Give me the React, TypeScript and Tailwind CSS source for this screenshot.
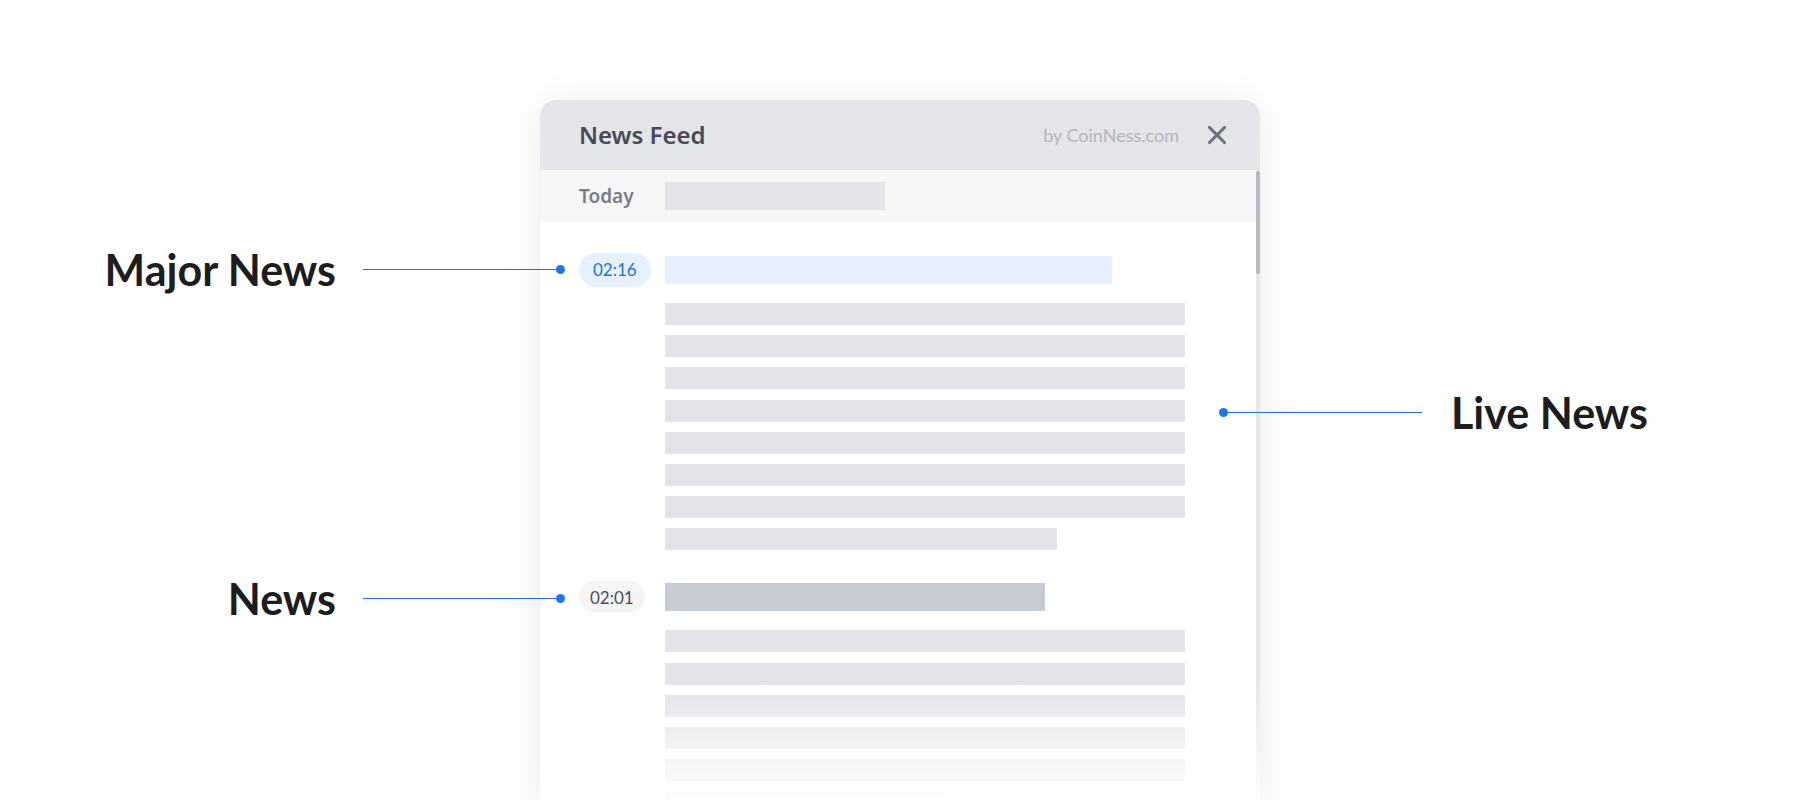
import { X } from 'lucide-react'

const sans = "font-['Noto_Sans',sans-serif]"
const lato = "font-['Lato',sans-serif]"

const LeftCallout = function ({ label, className }: { label: string; className: string }) {
  return (
    <div className={`absolute left-0 flex h-[44px] w-[565px] items-center justify-end ${className}`}>
      <span className={`${lato} text-[43px] leading-none font-bold text-[#1c1d21]`}>{label}</span>
      <span className="ml-[27px] h-px w-[197px] bg-[#1f6fe5]" />
      <span className="-ml-[4px] h-[9px] w-[9px] rounded-full bg-[#1877f2]" />
    </div>
  )
}

const Lines = function ({
  count,
  lastWidth,
  offset,
}: {
  count: number
  lastWidth: string
  offset: string
}) {
  return (
    <div className={`flex flex-col gap-[10.2px] ${offset}`}>
      {Array.from({ length: count }).map((_, i) => (
        <div
          key={i}
          className={`h-[22px] bg-[#e3e4e8] ${i === count - 1 ? lastWidth : 'w-[520px]'}`}
        />
      ))}
    </div>
  )
}

export default function App() {
  return (
    <div className="relative h-[800px] w-[1800px] overflow-hidden bg-white">
      <div className="pt-[100px] pl-[540px]">
        <div className="relative h-[700px] w-[720px] overflow-hidden rounded-t-[16px] bg-white shadow-[0_6px_40px_rgba(0,0,0,0.09)]">
          {/* header */}
          <div className="flex h-[70px] items-center bg-[#e4e5e9] pr-[28px] pl-[39px]">
            <h1 className={`${sans} text-[24px] font-semibold text-[#474b54]`}>News Feed</h1>
            <span className={`${lato} ml-auto text-[18px] text-[#b3b6bc]`}>by CoinNess.com</span>
            <X className="ml-[23px] h-[30px] w-[30px] text-[#6d727b]" strokeWidth={2.5} />
          </div>

          <div className="relative">
            <div className="flex h-[52px] items-center bg-[#f6f6f7] pl-[39px]">
              <span className={`${sans} w-[86px] text-[19px] font-semibold text-[#787d87]`}>Today</span>
              <div className="h-[28px] w-[220px] bg-[#e3e4e8]" />
            </div>

            <div className="pt-[31px] pl-[39px]">
              <div className="grid grid-cols-[86px_520px]">
                <div className="flex h-[34px] items-center">
                  <span className={`${lato} flex h-[34px] items-center rounded-full bg-[#e7f0fd] px-[14px] text-[17px] text-[#1a73e8]`}>
                    02:16
                  </span>
                </div>
                <div className="flex h-[34px] items-center">
                  <div className="h-[28px] w-[447px] bg-[#e6effd]" />
                </div>
                <div />
                <Lines count={8} lastWidth="w-[392px]" offset="mt-[16px]" />
              </div>

              <div className="mt-[31px] grid grid-cols-[86px_520px]">
                <div className="flex h-[32px] items-center">
                  <span className={`${lato} flex h-[32px] items-center rounded-full bg-[#f5f5f6] px-[11px] text-[17px] text-[#4a4e56]`}>
                    02:01
                  </span>
                </div>
                <div className="flex h-[32px] items-center">
                  <div className="h-[28px] w-[380px] bg-[#c8cbd2]" />
                </div>
                <div />
                <Lines count={6} lastWidth="w-[279px]" offset="mt-[17px]" />
              </div>
            </div>

            {/* scrollbar */}
            <div className="absolute top-0 right-0 h-full w-[4px] bg-[#e6e7ea]">
              <div className="mt-px h-[103px] w-full rounded-full bg-[#b6b9bf]" />
            </div>
          </div>

          <div className="absolute bottom-0 left-0 h-[120px] w-full bg-gradient-to-b from-white/0 to-white/95" />
        </div>
      </div>

      <LeftCallout label="Major News" className="top-[247px]" />
      <LeftCallout label="News" className="top-[576px]" />

      <div className="absolute top-[390px] left-[1219px] flex h-[44px] items-center">
        <span className="h-[9px] w-[9px] rounded-full bg-[#1877f2]" />
        <span className="-ml-[4px] h-px w-[198px] bg-[#1f6fe5]" />
        <span className={`${lato} ml-[29px] text-[43px] leading-none font-bold text-[#1c1d21]`}>Live News</span>
      </div>
    </div>
  )
}
